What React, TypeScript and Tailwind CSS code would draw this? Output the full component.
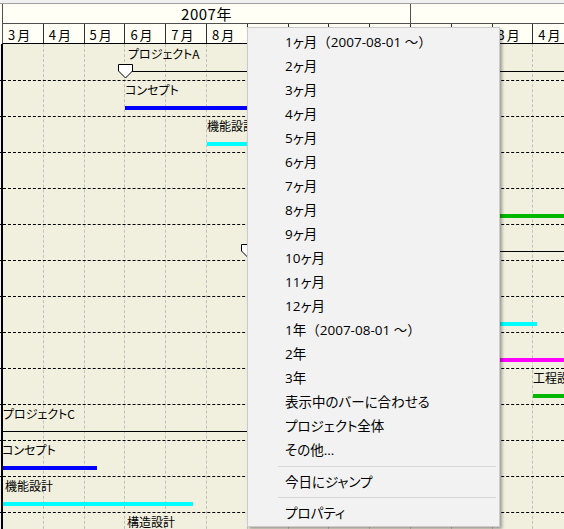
const MONTHS = ['3月', '4月', '5月', '6月', '7月', '8月', '9月', '10月', '11月', '12月', '1月', '2月', '3月', '4月'];

type Row = {
  label?: string;
  labelX?: number;
  bar?: [number, number, string];
  summary?: [number, number];
  marker?: number;
};

// x values are page pixels; the timeline starts at x=3
const rows: Row[] = [
  { label: 'プロジェクトA', labelX: 128, summary: [125, 600], marker: 125 },
  { label: 'コンセプト', labelX: 125, bar: [125, 400, 'bg-[#0000ff]'] },
  { label: '機能設計', labelX: 207, bar: [207, 330, 'bg-[#00ffff]'] },
  { bar: [289, 450, 'bg-[#ff00ff]'] },
  { bar: [370, 600, 'bg-[#00b800]'] },
  { summary: [248, 600], marker: 248 },
  { bar: [248, 411, 'bg-[#0000ff]'] },
  { bar: [330, 537, 'bg-[#00ffff]'] },
  { label: '構造設計', labelX: 452, bar: [452, 600, 'bg-[#ff00ff]'] },
  { label: '工程設計', labelX: 533, bar: [533, 600, 'bg-[#00b800]'] },
  { label: 'プロジェクトC', labelX: 3, summary: [3, 450] },
  { label: 'コンセプト', labelX: 2, bar: [3, 97, 'bg-[#0000ff]'] },
  { label: '機能設計', labelX: 5, bar: [3, 193, 'bg-[#00ffff]'] },
  { label: '構造設計', labelX: 127, bar: [127, 300, 'bg-[#ff00ff]'] },
];

type MenuItem = { text: string; range?: string };

const menuItems: MenuItem[] = [
  { text: '1ヶ月', range: '2007-08-01 ～' },
  { text: '2ヶ月' },
  { text: '3ヶ月' },
  { text: '4ヶ月' },
  { text: '5ヶ月' },
  { text: '6ヶ月' },
  { text: '7ヶ月' },
  { text: '8ヶ月' },
  { text: '9ヶ月' },
  { text: '10ヶ月' },
  { text: '11ヶ月' },
  { text: '12ヶ月' },
  { text: '1年', range: '2007-08-01 ～' },
  { text: '2年' },
  { text: '3年' },
  { text: '表示中のバーに合わせる' },
  { text: 'プロジェクト全体' },
  { text: 'その他...' },
];

function Marker({ x }: { x: number }) {
  return (
    <svg className="absolute top-[19px]" style={{ left: x - 3 - 7 }} width="15" height="15" viewBox="0 0 15 15">
      <polygon points="0.5,0.5 14.5,0.5 14.5,7 7.5,14 0.5,7" fill="white" stroke="black" strokeWidth="1" />
    </svg>
  );
}

function ChartRow({ row }: { row: Row }) {
  return (
    <div className="relative h-[36px] shrink-0 border-b border-dashed border-black">
      <span className="absolute -left-[3px] bottom-[-1px] w-[2px] h-px bg-black" />
      {row.summary && (
        <div
          className="absolute top-[26px] h-px bg-black"
          style={{ left: row.summary[0] - 3, width: row.summary[1] - row.summary[0] }}
        />
      )}
      {row.bar && (
        <div
          className={`absolute top-[25px] h-[4px] ${row.bar[2]}`}
          style={{ left: row.bar[0] - 3, width: row.bar[1] - row.bar[0] }}
        />
      )}
      {row.marker !== undefined && <Marker x={row.marker} />}
      {row.label && (
        <span
          className="absolute top-px whitespace-nowrap text-[12px] leading-[15px] text-black [font-feature-settings:'palt']"
          style={{ left: (row.labelX ?? 3) - 3 }}
        >
          {row.label}
        </span>
      )}
    </div>
  );
}

function ContextMenu() {
  return (
    <div
      className="absolute left-[247px] top-[27px] w-[253px] bg-[#f2f2f2] border border-[#cccccc] shadow-[2px_2px_3px_rgba(0,0,0,0.35)] pt-[2px] pb-px text-[13.5px] text-black"
      style={{ fontFamily: '"Open Sans", "Noto Sans CJK JP", sans-serif' }}
    >
      {menuItems.map((item, i) => (
        <div key={i} className="h-[24px] flex items-center pl-[37px] whitespace-nowrap">
          <span className="[font-feature-settings:'palt']">{item.text}</span>
          {item.range && (
            <>
              <span>（</span>
              <span>{item.range}</span>
              <span>）</span>
            </>
          )}
        </div>
      ))}
      <div className="h-[8px] flex items-center ml-[30px] mr-[3px]">
        <div className="h-px w-full bg-[#d7d7d7]" />
      </div>
      <div className="h-[24px] flex items-center pl-[37px] [font-feature-settings:'palt']">今日にジャンプ</div>
      <div className="h-[7px] flex items-center ml-[30px] mr-[3px]">
        <div className="h-px w-full bg-[#d7d7d7]" />
      </div>
      <div className="h-[24px] flex items-center pl-[37px] [font-feature-settings:'palt']">プロパティ</div>
    </div>
  );
}

export default function App() {
  return (
    <div
      className="relative w-[564px] h-[529px] overflow-hidden bg-[#f0f0f0] flex flex-col"
      style={{ fontFamily: '"Noto Sans CJK JP", "Noto Sans", sans-serif' }}
    >
      <div className="h-[3px] shrink-0" />
      <div className="shrink-0 border-t border-[#a0a0a0] bg-[#fffff5]">
        <div className="flex h-[20px] ml-[2px] border-l border-b border-[#505050]">
          <div className="w-[408px] shrink-0 border-r border-[#505050] flex items-center justify-center text-[15px] leading-none tracking-[0.5px]">
            2007年
          </div>
          <div className="flex-1" />
        </div>
        <div className="flex h-[20px] ml-[2px] border-l border-b border-l-[#505050] border-b-black">
          {MONTHS.map((m, i) => (
            <div
              key={i}
              className="w-[40.8px] shrink-0 overflow-hidden border-r border-[#303030] flex items-center pl-[5px] pt-px text-[13px] leading-none tracking-[2px]"
            >
              {m}
            </div>
          ))}
        </div>
      </div>
      <div className="relative flex-1 ml-px border-l-2 border-black bg-[#f1efdd] pt-px flex flex-col">
        <div className="absolute inset-0 flex pointer-events-none">
          {MONTHS.map((_, i) => (
            <div key={i} className="w-[40.8px] shrink-0 h-full border-r border-dashed border-[#c0c0c0]" />
          ))}
        </div>
        {rows.map((row, i) => (
          <ChartRow key={i} row={row} />
        ))}
      </div>
      <ContextMenu />
    </div>
  );
}
